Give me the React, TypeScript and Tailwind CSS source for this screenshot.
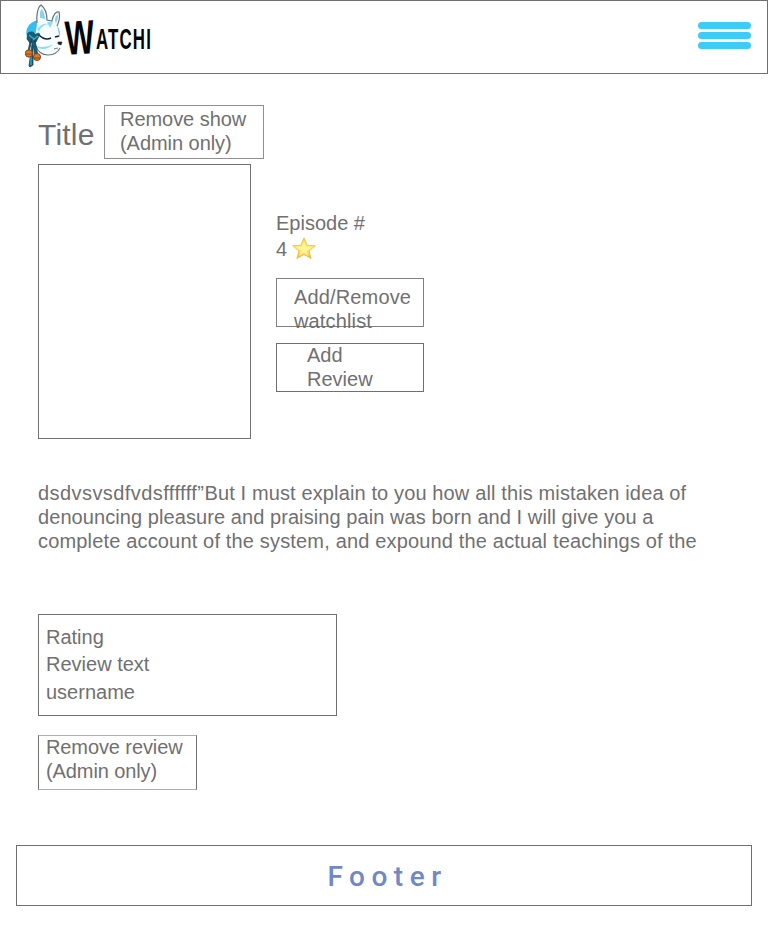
function FoxMask() {
  return (
    <svg className="block h-[64px] w-[38px] shrink-0" viewBox="0 0 38 64" fill="none" aria-hidden="true">
      <path d="M14 16C5 17-1 25 2 33c2 4 6 6 10 5l10-14Z" fill="#35bdf0" />
      <path d="M29 20c5 2 7 8 5 14l-4-5Z" fill="#35bdf0" />
      <path d="M12 20C11 11 13 3 16 1c4 3 6 8 6 15l5 1c1-6 4-10 7-9 1 4 0 10-2 14 2 4 2 9 2 13l2 4-2 5c-3 5-7 7-12 7-7 0-11-4-13-10Z" fill="#f7fcfe" />
      <path d="M12 19C11 11 13 3 16 1c4 3 6 8 6 15l5 1c1-6 4-10 7-9 1 4 0 10-2 14" stroke="#66757d" strokeWidth="1.2" />
      <path d="M11 42c2 6 6 9 12 9 6 0 10-3 12-7" stroke="#66757d" strokeWidth="1.1" />
      <path d="M15 14c0-5 0-8 2-9 2 3 3 7 3 10ZM30 17c0-4 1-6 3-6 0 4-1 6-2 8Z" fill="#8ed0e4" />
      <path d="M22 18l3 6 3-6ZM12 25c4-5 8-6 11-5-5 1-8 4-9 8ZM11 42c6 2 12 1 17-2-4 5-10 6-15 4Z" fill="#8fdcf1" />
      <path d="M14 31c4 4 8 5 12 3M30 33l4-1" stroke="#15242c" strokeWidth="1.7" />
      <path d="M33 38l4 0-1 3-3-1ZM29 45l4-1" fill="#222" stroke="#222" strokeWidth=".6" />
      <path d="M3 29c4-2 6-1 7 2 3-3 6-2 4 1l-3 6-6 1-3-4ZM7 35L4 48l-1-1 2-9ZM10 36l3 16-3-1-2-10 0 20-3 2-1-1 3-22Z" fill="#175d77" stroke="#174456" strokeWidth=".8" />
      <path d="M4 31l5 4M13 32l-5 4M6 47l0 14" stroke="#42afcc" strokeWidth="1.2" />
      <circle cx="4" cy="49.5" r="3.7" fill="#d97925" stroke="#753c1c" strokeWidth=".9" />
      <circle cx="12" cy="53" r="3.6" fill="#d97925" stroke="#753c1c" strokeWidth=".9" />
      <path d="M1 50h6M9 54h6" stroke="#753c1c" strokeWidth=".8" />
    </svg>
  );
}

function Logo() {
  return (
    <div className="flex items-start">
      <FoxMask />
      <svg className="block h-[64px] w-[92px] overflow-visible" viewBox="0 0 92 64" fill="#050505" aria-label="Watchi">
        <g fontFamily="'Liberation Sans', sans-serif" fontWeight="700">
          <text x="2" y="50" fontSize="48" textLength="29" lengthAdjust="spacingAndGlyphs" transform="rotate(-3 16 32)">W</text>
          <text x="33" y="45" fontSize="29" letterSpacing="2" textLength="56" lengthAdjust="spacingAndGlyphs">ATCHI</text>
        </g>
      </svg>
    </div>
  );
}

function Star() {
  return (
    <svg className="h-6 w-6" viewBox="0 0 24 24" aria-hidden="true">
      <defs>
        <linearGradient id="starFill" x1="0" y1="0" x2="0" y2="1">
          <stop offset="0" stopColor="#ffd43a" />
          <stop offset=".45" stopColor="#ffee72" />
          <stop offset="1" stopColor="#f5b92b" />
        </linearGradient>
      </defs>
      <path d="M12 .8l3.1 7.4 8.2.6-6.2 5.2 2 7.6-7.1-4.1-7.1 4.1 2-7.6L.7 8.8l8.2-.6Z" fill="url(#starFill)" stroke="#eab13a" strokeWidth=".7" strokeLinejoin="round" />
      <path d="M12 4l2 6 6 .4-5 3.6 1.5 5L12 16l-5 3 2-5.5-5-3 6-.5Z" fill="#fffab5" opacity=".7" />
    </svg>
  );
}

export default function App() {
  return (
    <div className="flex h-[934px] w-[768px] flex-col overflow-hidden bg-white font-['Liberation_Sans',Arial,sans-serif] text-[20px] leading-6 text-[#707070]">
      <header className="flex h-[74px] shrink-0 items-start justify-between border border-[#707070] pl-[24px] pr-[16px] pt-[3px]">
        <Logo />
        <button aria-label="Menu" className="mt-[18px] flex w-[53px] flex-col gap-[3px]">
          <span className="h-[7px] rounded-full bg-[#3dcbf8]" />
          <span className="h-[7px] rounded-full bg-[#3dcbf8]" />
          <span className="h-[7px] rounded-full bg-[#3dcbf8]" />
        </button>
      </header>
      <main className="flex flex-col items-start pl-[38px] pt-[31px]">
        <div className="flex h-[54px]">
          <h1 className="w-[66px] pt-[12px] text-[30px] leading-9 tracking-[0.2px]">Title</h1>
          <button className="flex w-[160px] items-start border border-[#909090] pl-[15px] pt-[1px] text-left tracking-[-0.05px]">Remove show<br />(Admin only)</button>
        </div>
        <section className="mt-[5px] flex gap-[25px]">
          <div className="h-[275px] w-[213px] border border-[#707070]" />
          <div className="flex flex-col pt-[47px]">
            <p>Episode #</p>
            <div className="mt-[2px] flex h-6 gap-[5px]"><span>4</span><Star /></div>
            <button className="mt-[17px] flex h-[49px] w-[148px] items-start border border-[#808080] pl-[17px] pt-[6px] text-left tracking-[0.15px]"><span>Add/Remove<br />watchlist</span></button>
            <button className="mt-[16px] flex h-[49px] w-[148px] items-start border border-[#707070] pl-[30px] text-left"><span className="-mt-px">Add<br />Review</span></button>
          </div>
        </section>
        <p className="mt-[42px] whitespace-nowrap">
          <span className="tracking-[0.43px]">dsdvsvsdfvdsffffff”</span><span className="tracking-[0.13px]">But I must explain to you how all this mistaken idea of</span><br />
          <span className="tracking-[0.075px]">denouncing pleasure and praising pain was born and I will give you a</span><br />
          <span className="tracking-[0.165px]">complete account of the system, and expound the actual teachings of the</span>
        </p>
        <section className="mt-[61px] flex h-[102px] w-[299px] flex-col border border-[#707070] pl-[7px] pt-[10px]">
          <p>Rating</p>
          <p className="mt-[3px]">Review text</p>
          <p className="mt-[4px]">username</p>
        </section>
        <button className="mt-[19px] flex h-[55px] w-[159px] items-start border border-x-[#707070] border-y-[#b0b0b0] pl-[7px] text-left tracking-[-0.1px]"><span className="-mt-px">Remove review<br />(Admin only)</span></button>
      </main>
      <footer className="mx-[16px] mt-[55px] flex h-[61px] shrink-0 items-center justify-center border border-[#707070] pl-[7px] pt-[2px] font-[Roboto,sans-serif] text-[28px] font-medium leading-8 tracking-[6.5px] text-[#7088c4]">
        Footer
      </footer>
    </div>
  );
}
